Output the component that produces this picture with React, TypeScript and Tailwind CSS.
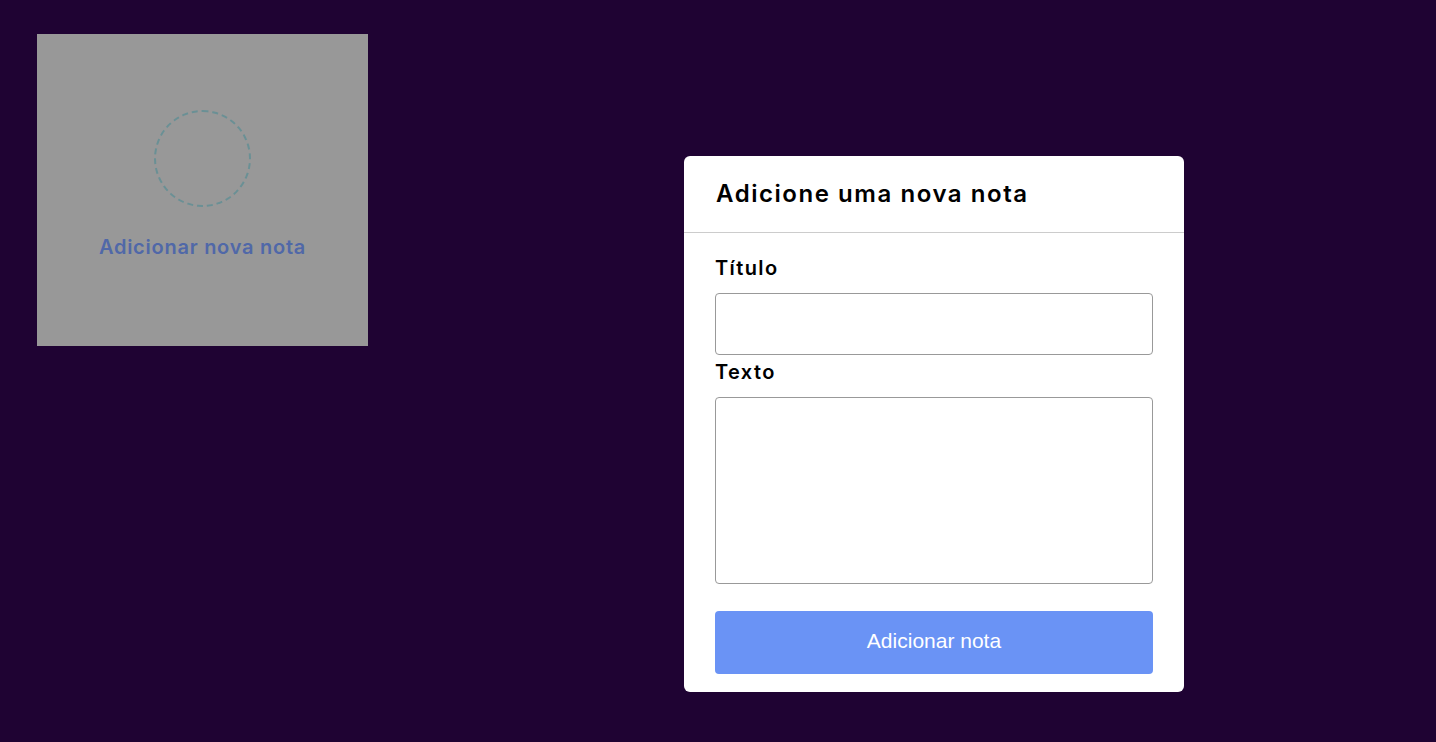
const poppins = "font-['Inter','Noto_Sans',sans-serif]";

export default function App() {
  return (
    <div className={`relative min-h-screen w-full bg-[#1f0333] ${poppins}`}>
      <div className="p-[37px] pt-[34px]">
        <button className="flex h-[312px] w-[331px] flex-col items-center bg-[#989898] pt-[76px]">
          <div className="h-[97px] w-[97px] rounded-full border-2 border-dashed border-[#6a9095]" />
          <span className="mt-[26px] text-[20px] font-semibold leading-[28px] tracking-[0.75px] text-[#5068a8]">Adicionar nova nota</span>
        </button>
      </div>

      <div className="absolute left-[684px] top-[156px] w-[500px] rounded-md bg-white">
        <div className="flex h-[77px] items-center border-b border-[#cccccc] px-[32px]">
          <h2 className="text-[24px] font-semibold tracking-[1.55px] text-black">Adicione uma nova nota</h2>
        </div>
        <form className="flex flex-col px-[31px] pb-[18px] pt-[20px]" onSubmit={(e) => e.preventDefault()}>
          <label className="h-[30px] text-[20px] font-semibold leading-[30px] tracking-[1.4px] text-black">Título</label>
          <input className="mt-[10px] h-[62px] rounded border border-[#999999] px-3 outline-none" />
          <label className="mt-[2px] h-[30px] text-[20px] font-semibold leading-[30px] tracking-[1.4px] text-black">Texto</label>
          <textarea className="mt-[10px] h-[187px] resize-none rounded border border-[#999999] px-3 outline-none" />
          <button
            type="submit"
            className="mt-[27px] h-[63px] rounded bg-[#6a93f5] pb-[3px] font-['Liberation_Sans',Arial,sans-serif] text-[21px] text-white"
          >
            Adicionar nota
          </button>
        </form>
      </div>
    </div>
  );
}
